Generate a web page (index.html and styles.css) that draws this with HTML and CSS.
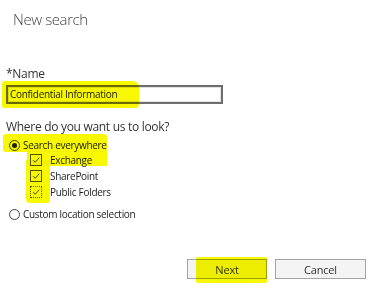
FILE: index.html
```html
<!DOCTYPE html>
<html>
<head>
<meta charset="utf-8">
<link rel="stylesheet" href="styles.css">
</head>
<body>
<div class="page">
  <h1 class="title">New search</h1>
  <label class="label">*Name</label>
  <div class="input">Confidential Information</div>
  <div class="question">Where do you want us to look?</div>
  <div class="option">
    <span class="radio checked"></span><span>Search everywhere</span>
  </div>
  <div class="subs">
    <div class="sub"><span class="cb"><svg viewBox="0 0 10 10" width="10" height="10"><path d="M2 5 L4.2 7.3 L8.3 2.6" fill="none" stroke="#555" stroke-width="1"/></svg></span><span>Exchange</span></div>
    <div class="sub"><span class="cb"><svg viewBox="0 0 10 10" width="10" height="10"><path d="M2 5 L4.2 7.3 L8.3 2.6" fill="none" stroke="#555" stroke-width="1"/></svg></span><span>SharePoint</span></div>
    <div class="sub"><span class="cb dotted"><svg viewBox="0 0 10 10" width="10" height="10"><path d="M2 5 L4.2 7.3 L8.3 2.6" fill="none" stroke="#555" stroke-width="1"/></svg></span><span>Public Folders</span></div>
  </div>
  <div class="option custom">
    <span class="radio"></span><span>Custom location selection</span>
  </div>
  <div class="buttons">
    <button class="btn next">Next</button>
    <button class="btn cancel">Cancel</button>
  </div>
</div>
<div class="hl hl-name"></div>
<div class="hl hl-search"></div>
<div class="hl hl-exch"></div>
<div class="hl hl-col"></div>
<div class="hl hl-next"></div>
</body>
</html>
```
FILE: styles.css
```css
html, body {
  margin: 0;
  padding: 0;
  background: #fff;
  width: 375px;
  height: 288px;
  overflow: hidden;
}
body {
  position: relative;
  font-family: "Open Sans", "Noto Sans", sans-serif;
  color: #333;
  letter-spacing: -0.3px;
}
.page {
  padding: 8px 0 0 6px;
  display: flex;
  flex-direction: column;
  align-items: flex-start;
}
.title {
  margin: 0 0 0 7px;
  font-size: 15px;
  font-weight: 300;
  line-height: 22px;
  color: #444;
  letter-spacing: -0.4px;
}
.label {
  margin-top: 36px;
  font-size: 12px;
  line-height: 16px;
  color: #333;
}
.input {
  margin-top: 3px;
  width: 211px;
  height: 15px;
  border: 2px solid #6d6d6d;
  box-shadow: inset 0 0 0 1px #e4e4e4;
  font-size: 10px;
  line-height: 15px;
  padding-left: 2px;
  color: #222;
}
.question {
  margin-top: 15px;
  font-size: 12px;
  line-height: 16px;
  color: #333;
}
.option {
  display: flex;
  align-items: center;
  gap: 3px;
  font-size: 10px;
  line-height: 14px;
  color: #222;
  margin-top: 3px;
  margin-left: 3px;
}
.radio {
  width: 9px;
  height: 9px;
  border: 1px solid #444;
  border-radius: 50%;
  box-sizing: content-box;
  position: relative;
}
.radio.checked::after {
  content: "";
  position: absolute;
  left: 2px;
  top: 2px;
  width: 5px;
  height: 5px;
  border-radius: 50%;
  background: #222;
}
.subs {
  margin-left: 24px;
  display: flex;
  flex-direction: column;
  gap: 2px;
  margin-top: 1px;
}
.sub {
  display: flex;
  align-items: center;
  gap: 8px;
  font-size: 10px;
  line-height: 14px;
  color: #222;
}
.cb {
  width: 10px;
  height: 10px;
  border: 1px solid #555;
  display: flex;
}
.cb.dotted {
  border-style: dotted;
}
.custom {
  margin-top: 8px;
}
.buttons {
  align-self: flex-end;
  display: flex;
  gap: 8px;
  margin-top: 38px;
  margin-right: 9px;
}
.btn {
  font-family: "Open Sans", "Noto Sans", sans-serif;
  font-size: 11px;
  letter-spacing: -0.2px;
  color: #333;
  background: #f4f4f4;
  border: 1px solid #a0a4a6;
  height: 20px;
  padding: 0;
  margin: 0;
}
.next {
  width: 80px;
}
.cancel {
  width: 91px;
}
.hl {
  position: absolute;
  background: #f8f800;
  mix-blend-mode: multiply;
}
.hl-name {
  left: 2px;
  top: 81px;
  width: 137px;
  height: 27px;
  border-radius: 3px 6px 4px 2px;
}
.hl-search {
  left: 3px;
  top: 134px;
  width: 104px;
  height: 18px;
  border-radius: 3px;
}
.hl-exch {
  left: 27px;
  top: 151px;
  width: 80px;
  height: 15px;
}
.hl-col {
  left: 26px;
  top: 160px;
  width: 24px;
  height: 43px;
  border-radius: 0 0 2px 4px;
}
.hl-next {
  left: 196px;
  top: 257px;
  width: 71px;
  height: 26px;
  border-radius: 2px;
}
```
